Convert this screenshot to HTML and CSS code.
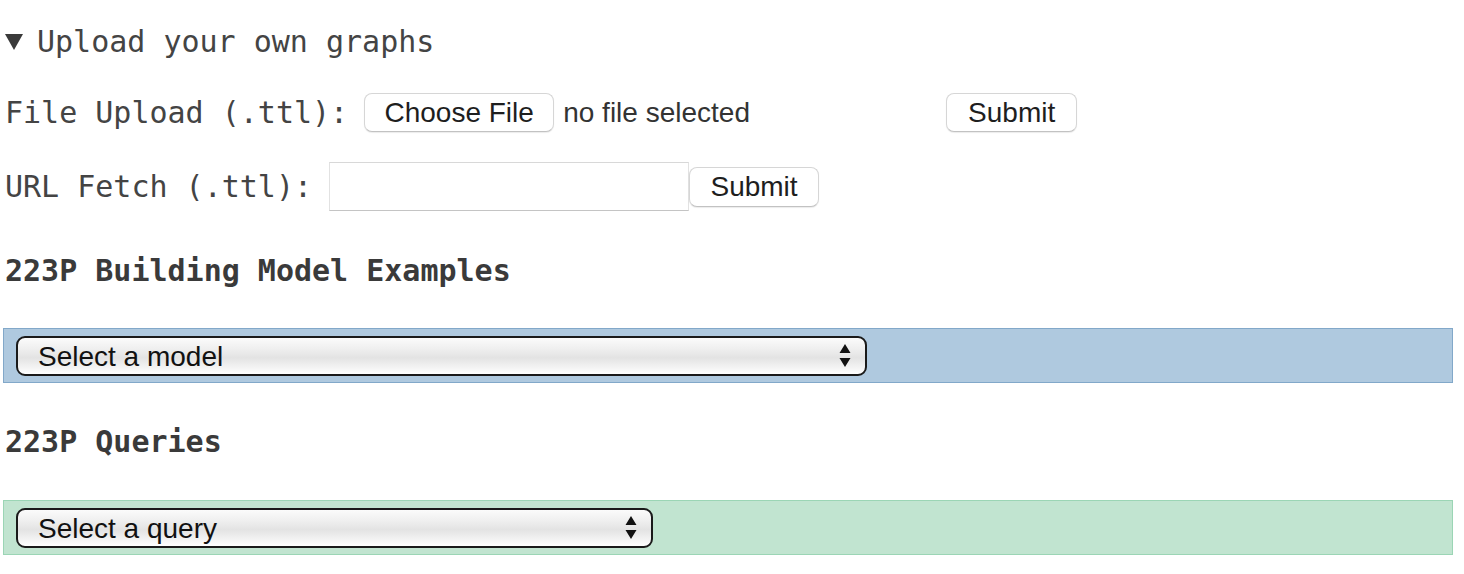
FILE: index.html
```html
<!DOCTYPE html>
<html lang="en">
<head>
<meta charset="utf-8">
<title>223P Explorer</title>
<link rel="stylesheet" href="styles.css">
</head>
<body>
<main class="page">
  <details class="uploads" open>
    <summary class="summary">
      <svg class="disclosure" width="18" height="16" viewBox="0 0 18 16" aria-hidden="true"><path d="M0 0 H18 L9 16 Z" fill="#3a3a3a"/></svg>
      <span>Upload your own graphs</span>
    </summary>
    <form class="row row-file">
      <label class="label">File Upload (.ttl):</label>
      <span class="btn btn-choose">Choose File</span>
      <span class="file-status">no file selected</span>
      <button type="button" class="btn btn-submit">Submit</button>
    </form>
    <form class="row row-url">
      <label class="label">URL Fetch (.ttl):</label>
      <input class="url-input" type="text">
      <button type="button" class="btn btn-submit btn-submit-url">Submit</button>
    </form>
  </details>

  <h3 class="heading heading-models">223P Building Model Examples</h3>
  <div class="box box-blue">
    <span class="select-wrap select-model">
      <select class="select"><option>Select a model</option></select>
      <svg class="arrows" width="12" height="24" viewBox="0 0 12 24" aria-hidden="true"><path d="M6 0 L11.5 9 H0.5 Z M0.5 14 H11.5 L6 23 Z" fill="#111"/></svg>
    </span>
  </div>

  <h3 class="heading heading-queries">223P Queries</h3>
  <div class="box box-green">
    <span class="select-wrap select-query">
      <select class="select"><option>Select a query</option></select>
      <svg class="arrows" width="12" height="24" viewBox="0 0 12 24" aria-hidden="true"><path d="M6 0 L11.5 9 H0.5 Z M0.5 14 H11.5 L6 23 Z" fill="#111"/></svg>
    </span>
  </div>
</main>
</body>
</html>
```

FILE: styles.css
```css
html, body {
  margin: 0;
  padding: 0;
  background: #ffffff;
}

.page {
  padding: 0 11px 0 3px;
  font-family: "DejaVu Sans Mono", "Liberation Mono", monospace;
  font-size: 30px;
  line-height: 36px;
  color: #444444;
}

.uploads {
  margin: 0;
}

.summary {
  list-style: none;
  display: flex;
  align-items: center;
  margin-top: 24px;
  padding-left: 2px;
  height: 36px;
  cursor: pointer;
}

.summary::-webkit-details-marker {
  display: none;
}

.disclosure {
  display: block;
  width: 18px;
  height: 16px;
  margin: 0 14px 0 0;
}

.row {
  display: flex;
  align-items: center;
  margin: 0;
  padding-left: 2px;
}

.row-file {
  margin-top: 33px;
  height: 39px;
}

.row-url {
  margin-top: 30px;
  height: 49px;
}

.label {
  white-space: pre;
  color: #444444;
}

.btn {
  display: inline-flex;
  align-items: center;
  justify-content: center;
  box-sizing: border-box;
  height: 39px;
  padding: 0;
  white-space: nowrap;
  font-family: "Liberation Sans", Arial, sans-serif;
  font-size: 28px;
  color: #1e1e1e;
  background: #ffffff;
  border: 1px solid #d6d6d6;
  border-bottom-color: #c2c2c2;
  border-radius: 8px;
  box-shadow: 0 1px 1px rgba(0, 0, 0, 0.08);
}

.btn-choose {
  margin-left: 16px;
  width: 190px;
}

.file-status {
  font-family: "Liberation Sans", Arial, sans-serif;
  font-size: 28px;
  color: #333333;
  margin-left: 9px;
  width: 383px;
  white-space: nowrap;
}

.btn-submit {
  width: 131px;
}

.url-input {
  box-sizing: border-box;
  width: 360px;
  height: 49px;
  margin: 0 0 0 17px;
  padding: 0 8px;
  font-size: 28px;
  border: 1px solid #e2e2e2;
  border-top-color: #d8d8d8;
  border-bottom-color: #c4c4c4;
  border-radius: 0;
  background: #ffffff;
}

.btn-submit-url {
  width: 130px;
  height: 40px;
}

.heading {
  margin: 0;
  padding-left: 2px;
  font-size: 30px;
  line-height: 36px;
  font-weight: bold;
  color: #3a3a3a;
}

.heading-models {
  margin-top: 42px;
}

.heading-queries {
  margin-top: 41px;
}

.box {
  box-sizing: border-box;
  height: 55px;
  padding: 7px 12px 0 12px;
  border: 1px solid;
}

.heading-models + .box {
  margin-top: 39px;
}

.heading-queries + .box {
  margin-top: 40px;
}

.box-blue {
  background: #afc9df;
  border-color: #82a8c9;
}

.box-green {
  background: #c1e4d0;
  border-color: #9bd5b5;
}

.select-wrap {
  position: relative;
  display: inline-block;
  height: 40px;
}

.select-model {
  width: 851px;
}

.select-query {
  width: 637px;
}

.select {
  -webkit-appearance: none;
  appearance: none;
  box-sizing: border-box;
  width: 100%;
  height: 40px;
  margin: 0;
  padding: 0 0 0 20px;
  font-family: "Liberation Sans", Arial, sans-serif;
  font-size: 28px;
  color: #111111;
  border: 2px solid #1a1a1a;
  border-radius: 9px;
  background: linear-gradient(#fbfbfb 0%, #efefef 30%, #e3e3e3 55%, #f2f2f2 80%, #ffffff 100%);
}

.arrows {
  position: absolute;
  right: 16px;
  top: 8px;
  pointer-events: none;
}
```
